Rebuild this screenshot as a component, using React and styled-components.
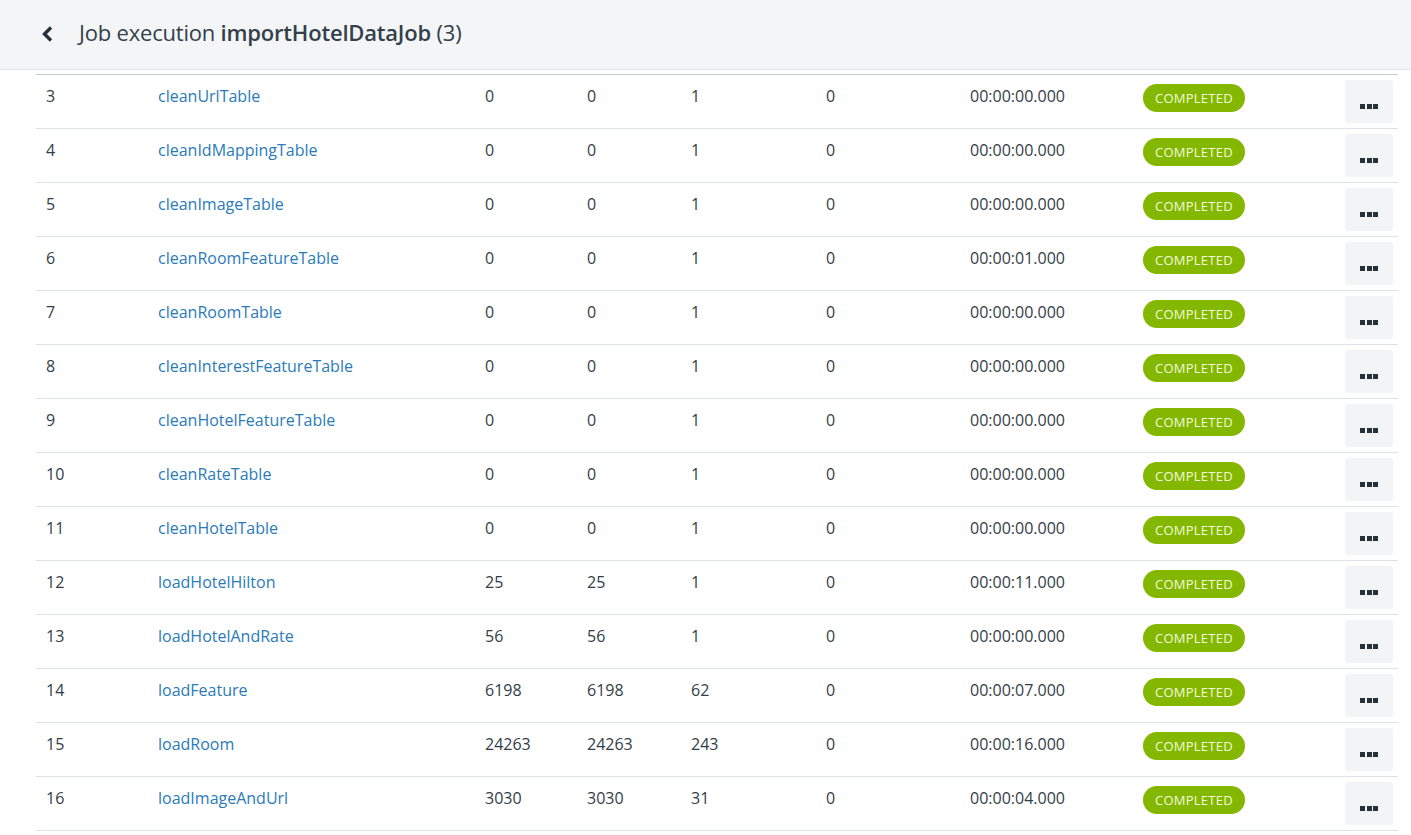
import React from 'react';
import styled, { createGlobalStyle } from 'styled-components';

const GlobalStyle = createGlobalStyle`
  html, body {
    margin: 0;
    padding: 0;
    background: #ffffff;
    font-family: "Open Sans", "Liberation Sans", sans-serif;
    color: #333d47;
    overflow: hidden;
  }
`;

const Header = styled.header`
  height: 69px;
  background: #f4f5f7;
  border-bottom: 1px solid #e2e5e8;
  display: flex;
  align-items: center;
  padding-left: 40px;
  box-sizing: content-box;
`;

const BackButton = styled.button`
  border: none;
  background: none;
  padding: 0;
  width: 16px;
  height: 20px;
  display: flex;
  align-items: center;
  cursor: pointer;
  margin: 0 23px 1px 0;
`;

const Title = styled.h1`
  margin: 0 0 6px;
  font-size: 22px;
  line-height: 30px;
  font-weight: 400;
  color: #333f4b;
  letter-spacing: -0.2px;

  strong {
    font-weight: 600;
  }
`;

const Table = styled.div`
  margin: 4px 13px 0 36px;
  border-top: 1px solid #c3cbd2;
`;

const Row = styled.div`
  display: grid;
  grid-template-columns: 112px 327px 102px 104px 135px 144px 173px 202px 1fr;
  align-items: start;
  height: 53px;
  padding-left: 10px;
  border-bottom: 1px solid #dde2e6;
  font-size: 16px;
  line-height: 22px;
`;

const Cell = styled.div`
  white-space: nowrap;
  padding-top: ${(p) => p.$top ?? 10}px;
`;

const StepLink = styled.a`
  color: #2b7bb9;
  text-decoration: none;
`;

const Badge = styled.span`
  display: inline-flex;
  align-items: center;
  height: 28px;
  padding: 0 12px;
  border-radius: 14px;
  background: #84b800;
  color: #f1fadc;
  font-size: 13px;
  letter-spacing: 0.25px;
`;

const MoreButton = styled.button`
  width: 48px;
  height: 43px;
  border: none;
  border-radius: 3px;
  background: #f3f4f6;
  display: flex;
  justify-content: center;
  align-items: flex-end;
  gap: 1.5px;
  padding: 0 0 14px;
  cursor: pointer;
`;

const Dot = styled.span`
  width: 5px;
  height: 5px;
  background: #26313c;
`;

const steps = [
  [3, 'cleanUrlTable', '0', '0', '1', '0', '00:00:00.000'],
  [4, 'cleanIdMappingTable', '0', '0', '1', '0', '00:00:00.000'],
  [5, 'cleanImageTable', '0', '0', '1', '0', '00:00:00.000'],
  [6, 'cleanRoomFeatureTable', '0', '0', '1', '0', '00:00:01.000'],
  [7, 'cleanRoomTable', '0', '0', '1', '0', '00:00:00.000'],
  [8, 'cleanInterestFeatureTable', '0', '0', '1', '0', '00:00:00.000'],
  [9, 'cleanHotelFeatureTable', '0', '0', '1', '0', '00:00:00.000'],
  [10, 'cleanRateTable', '0', '0', '1', '0', '00:00:00.000'],
  [11, 'cleanHotelTable', '0', '0', '1', '0', '00:00:00.000'],
  [12, 'loadHotelHilton', '25', '25', '1', '0', '00:00:11.000'],
  [13, 'loadHotelAndRate', '56', '56', '1', '0', '00:00:00.000'],
  [14, 'loadFeature', '6198', '6198', '62', '0', '00:00:07.000'],
  [15, 'loadRoom', '24263', '24263', '243', '0', '00:00:16.000'],
  [16, 'loadImageAndUrl', '3030', '3030', '31', '0', '00:00:04.000'],
];

function App() {
  return (
    <>
      <GlobalStyle />
      <Header>
        <BackButton aria-label="Back">
          <svg width="14" height="18" viewBox="0 0 14 18">
            <polyline points="11,2.5 4.5,9 11,15.5" fill="none" stroke="#26313c" strokeWidth="3.4" />
          </svg>
        </BackButton>
        <Title>
          Job execution <strong>importHotelDataJob</strong> (3)
        </Title>
      </Header>
      <Table>
        {steps.map(([id, name, read, write, commits, skips, duration]) => (
          <Row key={id}>
            <Cell>{id}</Cell>
            <Cell><StepLink href="#">{name}</StepLink></Cell>
            <Cell>{read}</Cell>
            <Cell>{write}</Cell>
            <Cell>{commits}</Cell>
            <Cell>{skips}</Cell>
            <Cell>{duration}</Cell>
            <Cell $top={9}><Badge>COMPLETED</Badge></Cell>
            <Cell $top={5}>
              <MoreButton aria-label="More">
                <Dot /><Dot /><Dot />
              </MoreButton>
            </Cell>
          </Row>
        ))}
      </Table>
    </>
  );
}

export default App;
